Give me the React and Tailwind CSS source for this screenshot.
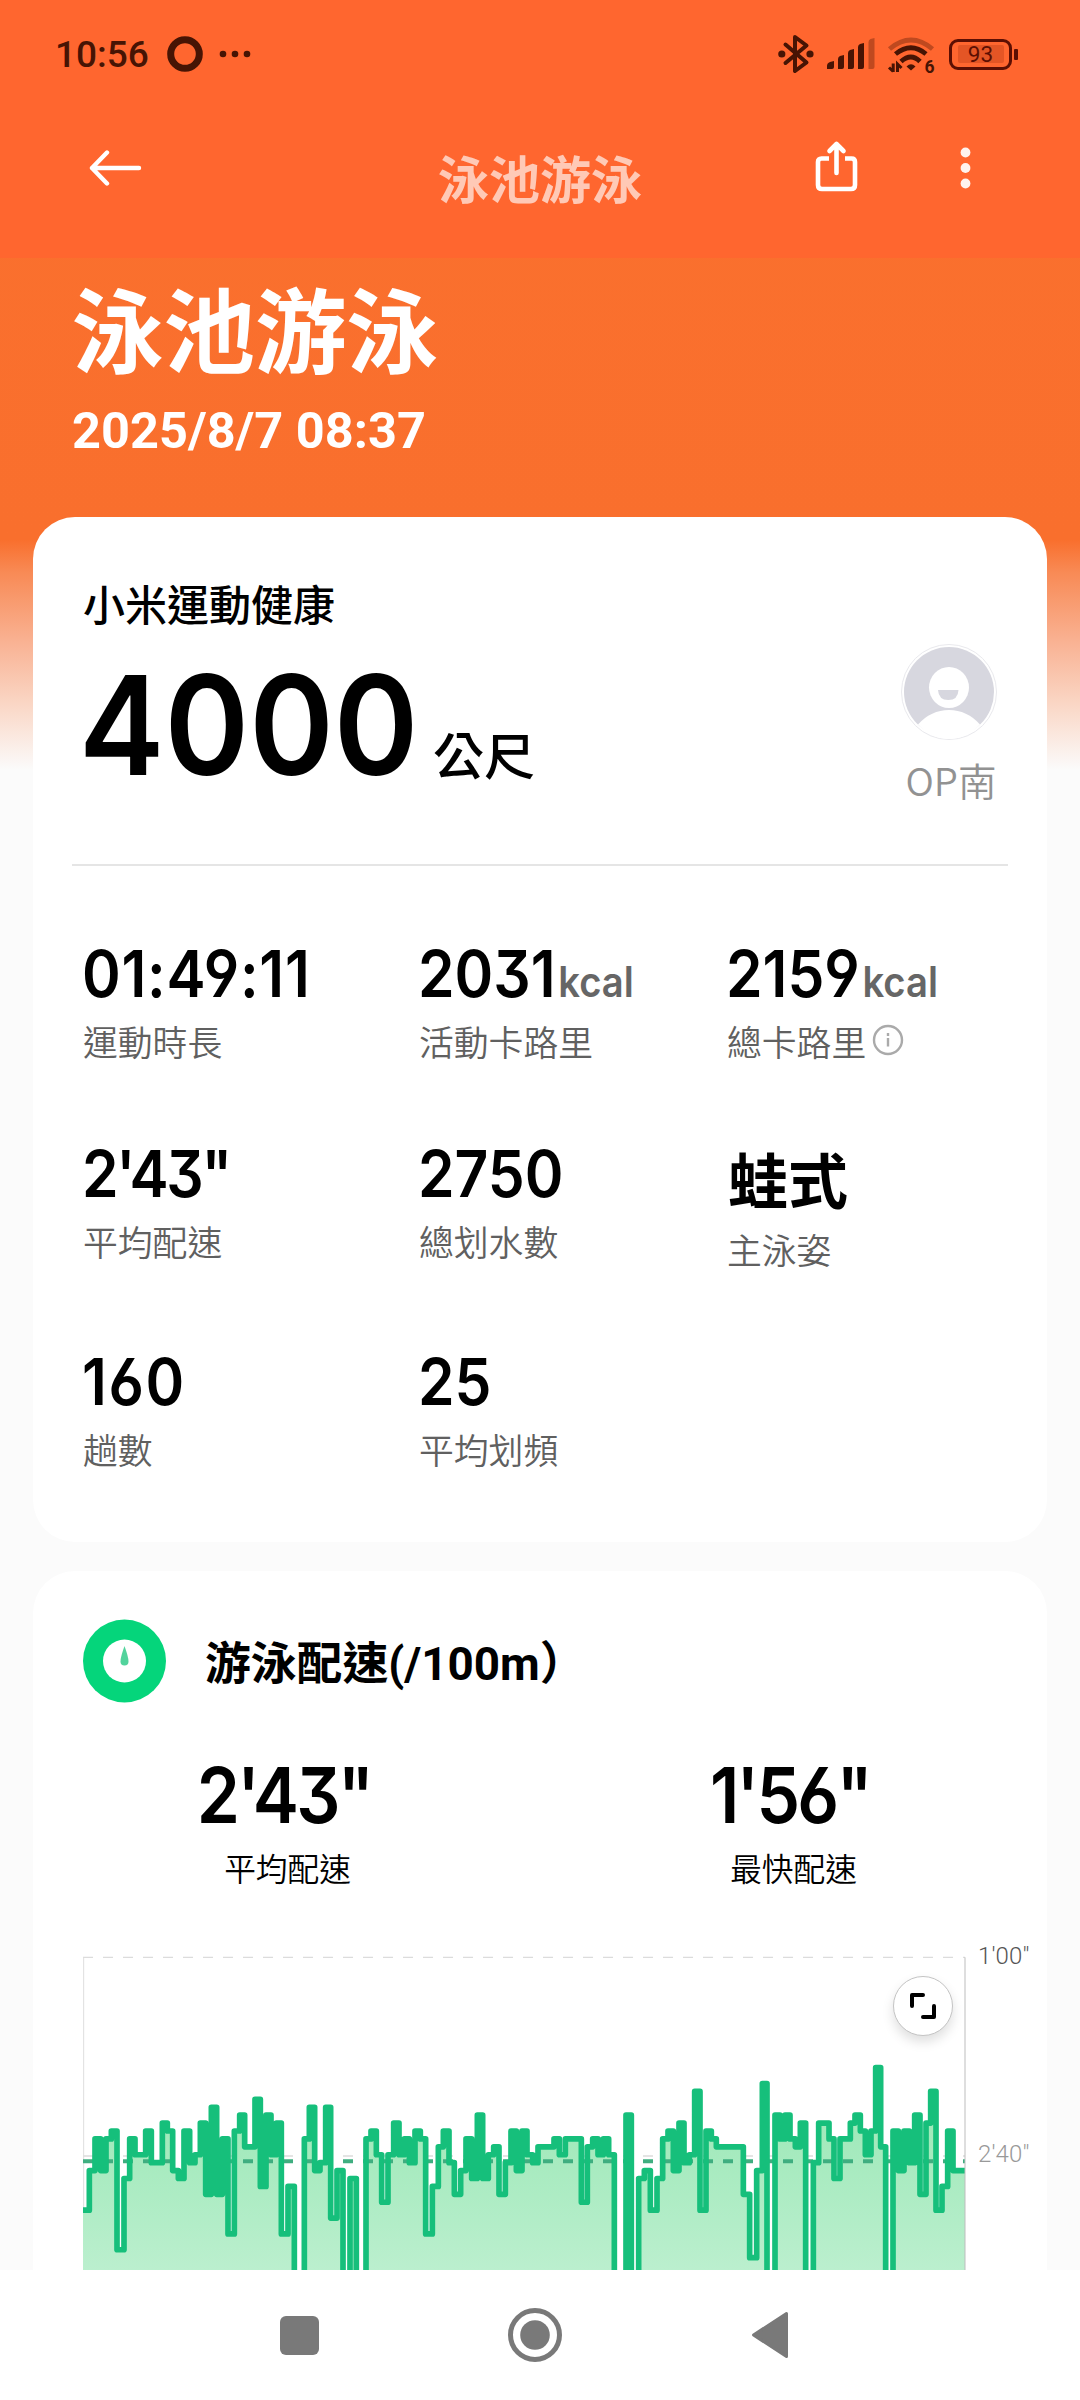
import React from "react";

const CJK = "font-['Noto_Sans_CJK_TC','Noto_Sans_CJK_SC',sans-serif]";
const NUM = "font-['Inter',sans-serif] font-semibold whitespace-nowrap [font-feature-settings:'cv03','cv04','cv09']";

/* Pace trace: each entry is [pace level, end of the lap on the time axis].
   Levels grow downwards; OFF is a rest that falls below the visible range. */
const OFF = 30;
const FIRST = [
  [14, 88], [9, 105], [5, 122], [9, 138], [5, 154], [4, 171], [19, 192], [10, 209], [5, 225], [7, 257],
  [4, 274], [8, 307], [3, 322], [4, 338], [9, 355], [10, 372], [4, 389], [8, 405], [7, 421], [3, 437],
  [12, 454], [1, 470], [12, 487], [5, 504], [17, 523], [4, 539], [2, 554], [6, 585], [0, 601], [11, 618],
  [2, 633], [7, 649], [3, 664], [17, 684], [11, 703], [OFF, 733], [5, 748], [1, 764], [9, 780], [8, 797],
  [1, 812], [15, 831], [9, 849], [OFF, 870], [10, 889], [OFF, 918], [5, 933], [4, 949], [7, 965], [13, 984],
];
const SECOND = [
  [7, 41], [3, 57], [7, 73], [5, 88], [8, 105], [4, 121], [5, 137], [17, 157], [11, 175], [6, 190],
  [4, 207], [8, 223], [12, 242], [9, 258], [5, 275], [10, 292], [2, 308], [10, 325], [7, 341], [6, 357],
  [12, 376], [8, 393], [4, 409], [9, 426], [4, 441], [7, 458], [8, 474], [6, 522], [5, 538], [7, 556],
  [5, 604], [13, 622], [6, 638], [5, 654], [7, 670], [5, 686], [7, 703], [OFF, 738], [2, 754], [OFF, 776],
  [10, 793], [9, 811], [14, 831], [10, 848], [5, 864], [4, 880], [9, 897], [3, 912], [8, 928], [7, 944], [-1, 960],
];
const THIRD = [
  [14, 18], [4, 34], [5, 49], [6, 130], [12, 149], [20, 170], [9, 187], [-2, 201], [OFF, 225], [2, 240],
  [5, 255], [2, 270], [5, 286], [6, 301], [3, 317], [OFF, 340], [8, 356], [3, 387], [5, 402], [10, 420],
  [5, 451], [3, 465], [2, 481], [4, 496], [7, 513], [4, 527], [-4, 542], [6, 557], [OFF, 579], [4, 595],
  [9, 612], [4, 628], [8, 644], [2, 660], [12, 678], [3, 692], [-1, 708], [14, 726], [11, 743], [4, 759], [9, 795],
];
const LAPS = [
  ...FIRST.map(([l, x]) => [l, x - 69]),
  ...SECOND.map(([l, x]) => [l, x + 891]),
  ...THIRD.map(([l, x]) => [l, x + 1851]),
];
const levelY = (l) => 430 + 23.75 * l;
const TRACE =
  `M0 ${levelY(LAPS[0][0])}` +
  LAPS.map(([l, x]) => `V${levelY(l)}H${x}`).join("");

function StatusBar() {
  return (
    <div className="flex h-[108px] items-center pl-[55px] pr-[68px] text-[#471404]">
      <span className="font-['Roboto',sans-serif] text-[37px] font-medium leading-none">10:56</span>
      <svg className="ml-[18px]" width="36" height="36" viewBox="0 0 36 36">
        <circle cx="18" cy="18" r="14.3" fill="none" stroke="currentColor" strokeWidth="7" />
      </svg>
      <svg className="ml-[16px]" width="32" height="8" viewBox="0 0 32 8" fill="currentColor">
        <circle cx="4" cy="4" r="3.3" />
        <circle cx="16" cy="4" r="3.3" />
        <circle cx="28" cy="4" r="3.3" />
      </svg>
      <div className="ml-auto flex items-center">
        <svg width="36" height="40" viewBox="0 0 36 40" fill="none" stroke="currentColor" strokeWidth="4" strokeLinecap="round" strokeLinejoin="round">
          <path d="M7.500 10.500L28.500 28.500L17 37V3L28.500 11.500L7.500 29" />
          <circle cx="3.800" cy="20" r="3.600" fill="currentColor" stroke="none" />
          <circle cx="32" cy="20" r="3.600" fill="currentColor" stroke="none" />
        </svg>
        <svg className="ml-[13px]" width="48" height="32" viewBox="0 0 48 32" fill="currentColor">
          <path d="M0 31v-3q0-3 3-4l4-1v6q0 2-2 2z" />
          <path d="M11 31V21q0-2 2-3l4-1v12q0 2-2 2z" />
          <path d="M21 31V15q0-2 2-3l4-1v18q0 2-2 2z" />
          <path d="M31 31V9q0-2 2-3l4-1v24q0 2-2 2z" />
          <path opacity=".35" d="M41.500 31V4q0-2 2-3l4-1v29q0 2-2 2z" />
        </svg>
        <svg className="ml-[13px] overflow-visible" width="46" height="40" viewBox="0 0 46 40" fill="none" stroke="currentColor" strokeWidth="4.800">
          <path opacity=".35" d="M1.500 15Q23 -3 44.500 15" />
          <path d="M7.500 20Q23 7.500 38 20" />
          <path d="M13 27.500Q23 18.500 32 27.500" />
          <path d="M18.500 32.500Q23 28 27.500 32.500L23 36.500z" fill="currentColor" stroke="none" />
          <path d="M5.200 29.500V38M1 33.500L5.200 37.500M9.500 38V30L13.500 34" strokeWidth="3" />
          <text x="36.500" y="39" fill="currentColor" stroke="none" fontFamily="Roboto" fontWeight="700" fontSize="17.500">6</text>
        </svg>
        <div className="relative ml-[15px] flex h-[31px] w-[63px] items-center justify-center rounded-[9px] border-[3px] border-[#5c0f03]">
          <div className="flex h-[18px] w-[46px] items-center justify-center rounded-[2px] bg-[#e45525] font-['Roboto',sans-serif] text-[22.500px] leading-none text-[#5c0f03]">93</div>
          <div className="absolute -right-[9px] top-[7px] h-[11px] w-[4px] rounded-[1px] bg-[#5c0f03]" />
        </div>
      </div>
    </div>
  );
}

function Toolbar() {
  return (
    <div className="grid h-[150px] grid-cols-[360px_360px_360px] text-white">
      <div className="pl-[88px] pt-[42px]">
        <svg width="54" height="36" viewBox="0 0 54 36" fill="none" stroke="currentColor" strokeWidth="4.400" strokeLinecap="round" strokeLinejoin="round">
          <path d="M51 18H4M19 2.500L4 18l15 15.500" />
        </svg>
      </div>
      <div className={`${CJK} pt-[42px] text-center text-[51px] font-bold leading-[54px] text-white/65`}>泳池游泳</div>
      <div className="flex pl-[94px] pt-[31px]">
        <svg width="45" height="54" viewBox="0 0 45 54" fill="none" stroke="currentColor" strokeWidth="4.600" strokeLinecap="round" strokeLinejoin="round">
          <path strokeLinecap="butt" d="M15 19.500H7.500Q4 19.500 4 23V46Q4 50 8 50H37Q41 50 41 46V23Q41 19.500 37.500 19.500H31" />
          <path d="M22.500 34V5M15.500 12L22.500 5L29.500 12" />
        </svg>
        <svg className="ml-[100px] mt-[6px]" width="14" height="46" viewBox="0 0 14 46" fill="currentColor" opacity=".92">
          <circle cx="6.500" cy="7.500" r="4.900" />
          <circle cx="6.500" cy="23" r="4.900" />
          <circle cx="6.500" cy="38.500" r="4.900" />
        </svg>
      </div>
    </div>
  );
}

function Stat({ value, unit, label, info, spacing, cjk }) {
  return (
    <div className="pl-[2px]">
      {cjk ? (
        <div className={`${CJK} h-[76px] pt-[8px] text-[60px] font-bold leading-[60px] text-black`}>{value}</div>
      ) : (
        <div className="-ml-[2px] flex h-[68px] origin-left scale-x-[0.91] items-baseline leading-[68px]">
          <span className={`${NUM} text-[64.500px] text-black ${spacing || ""}`}>{value}</span>
          {unit && <span className={`${NUM} ml-[3px] text-[42px] text-[#666]`}>{unit}</span>}
        </div>
      )}
      <div className={`${CJK} mt-[13px] flex items-center text-[34.800px] font-[350] leading-[40px] text-[#606060] -ml-[1px]`}>
        {label}
        {info && (
          <svg className="ml-[5px] -mt-[2px]" width="34" height="34" viewBox="0 0 34 34" fill="none" stroke="#aaa" strokeWidth="2.400">
            <circle cx="17" cy="17" r="14" />
            <path d="M17 15v8.500M17 10v3" />
          </svg>
        )}
      </div>
    </div>
  );
}

function Summary() {
  return (
    <section className="mx-[33px] h-[1025px] rounded-[42px] bg-white">
      <div className="flex h-[347px] pl-[50px] pt-[62px]">
        <div className="w-[780px]">
          <div className={`${CJK} text-[42px] font-medium leading-[48px] text-black`}>小米運動健康</div>
          <div className="mt-[23px] flex items-baseline leading-[150px] text-black">
            <span className={`${NUM} w-[351px] origin-left scale-x-[0.93] text-[138px] -ml-[4px]`}>4000</span>
            <span className={`${CJK} ml-[3px] text-[51px] font-medium`}>公尺</span>
          </div>
        </div>
        <div className="ml-[13px] flex w-[146px] flex-col items-center pt-[65px]">
          <svg width="96" height="96" viewBox="0 0 96 96">
            <circle cx="48" cy="48" r="47.500" fill="none" stroke="#e9e9ed" strokeWidth="1" />
            <circle cx="48" cy="48" r="45" fill="#d7d7df" />
            <path d="M17 80.500Q30 66 48 66T79 80.500Q66 95 48 95T17 80.500z" fill="#fff" />
            <ellipse cx="48" cy="43.500" rx="20" ry="20.500" fill="#fff" />
            <path d="M37 46H57.500Q57 56 47.300 56T37 46z" fill="#d7d7df" />
          </svg>
          <div className={`${CJK} mt-[17px] ml-[4px] text-[38.500px] font-[350] leading-[44px] text-[#929292]`}>OP南</div>
        </div>
      </div>
      <div className="mx-[39px] h-[2px] bg-[#e5e5e5]" />
      <div className="grid grid-cols-[336px_308px_1fr] pl-[49px] pt-[74px]">
        <div className="h-[200px]"><Stat value="01:49:11" label="運動時長" spacing="tracking-[0.8px]" /></div>
        <Stat value="2031" unit="kcal" label="活動卡路里" />
        <Stat value="2159" unit="kcal" label="總卡路里" info />
        <div className="h-[208px]"><Stat value={"2'43\""} label="平均配速" spacing="tracking-[-2.5px]" /></div>
        <Stat value="2750" label="總划水數" />
        <Stat value="蛙式" label="主泳姿" cjk />
        <Stat value="160" label="趟數" spacing="tracking-[1.8px]" />
        <Stat value="25" label="平均划頻" />
      </div>
    </section>
  );
}

function Chart() {
  return (
    <div className="relative ml-[1px] flex h-[314px]">
      <svg width="883" height="314" viewBox="0 0 2649 942" fill="none">
        <defs>
          <linearGradient id="pace" x1="0" y1="500" x2="0" y2="942" gradientUnits="userSpaceOnUse">
            <stop offset="0" stopColor="#a0e9ba" />
            <stop offset="1" stopColor="#bbefce" />
          </linearGradient>
        </defs>
        <path d="M0 4H2646M0 600H2646" stroke="#dcdcdc" strokeWidth="4" strokeDasharray="30 30" />
        <path d="M2 4V942" stroke="#dedede" strokeWidth="3" />
        <path d={`${TRACE}V1200H0z`} fill="url(#pace)" />
        <path d="M0 616H2646" stroke="#3fae80" strokeWidth="12" strokeDasharray="30 30" />
        <path d={TRACE} stroke="#16bf7b" strokeWidth="17" strokeLinejoin="round" />
        <path d="M2646 4V942" stroke="#bdbdbd" strokeWidth="3" />
      </svg>
      <div className="ml-[12px] flex flex-col justify-between font-['Roboto',sans-serif] text-[24px] font-light leading-[24px] tracking-[0.100px]">
        <span className="-mt-[12px] text-[#555]">1'00"</span>
        <span className="mb-[104px] text-[#999]">2'40"</span>
      </div>
      <div className="absolute left-[810px] top-[20px] flex size-[60px] items-center justify-center rounded-full border border-[#c4c4c4] bg-white shadow-[0_6px_12px_rgba(0,0,0,0.13)]">
        <svg width="28" height="28" viewBox="0 0 28 28" fill="none" stroke="#000" strokeWidth="4" strokeLinecap="round" strokeLinejoin="round">
          <path d="M3 14V3H14M25 14V25H14" />
        </svg>
      </div>
    </div>
  );
}

function Pace() {
  return (
    <section className="mx-[33px] mt-[29px] h-[699px] rounded-t-[42px] bg-white pl-[49px] pt-[48px]">
      <div className="flex h-[84px] items-center">
        <svg width="84" height="84" viewBox="0 0 84 84">
          <circle cx="42.500" cy="42" r="41.500" fill="#05d57b" />
          <circle cx="42.500" cy="42" r="21.500" fill="#fff" />
          <path d="M42.500 27Q46.500 38 46.500 42.500A4 4 0 0 1 38.500 42.500Q38.500 38 42.500 27z" fill="#52d39c" />
        </svg>
        <h2 className="ml-[39px] pt-[8px] font-['Roboto','Noto_Sans_CJK_TC',sans-serif] text-[45.800px] font-bold leading-[60px] text-black">游泳配速(/100m）</h2>
      </div>
      <div className="grid h-[253px] grid-cols-[506px_506px] -ml-[49px] pt-[52px] text-center text-black">
        {[["2'43\"", "平均配速"], ["1'56\"", "最快配速"]].map(([v, l]) => (
          <div key={l}>
            <div className={`${NUM} -ml-[4px] scale-x-[0.9] text-[77px] leading-[80px] tracking-[-3px]`}>{v}</div>
            <div className={`${CJK} mt-[12px] pl-[3px] text-[31.700px] font-[350] leading-[40px]`}>{l}</div>
          </div>
        ))}
      </div>
      <Chart />
    </section>
  );
}

function NavBar() {
  return (
    <nav className="h-[130px] bg-white pl-[280px] pt-[38px]">
      <div className="flex items-center text-[#797979]">
        <div className="size-[39px] rounded-[6px] bg-[#797979]" />
        <svg className="ml-[189px]" width="54" height="54" viewBox="0 0 54 54">
          <circle cx="27" cy="27" r="24.500" fill="none" stroke="currentColor" strokeWidth="5" />
          <circle cx="27" cy="27" r="14.800" fill="currentColor" />
        </svg>
        <svg className="ml-[189px]" width="38" height="48" viewBox="0 0 38 48" fill="currentColor" stroke="currentColor" strokeWidth="3" strokeLinejoin="round">
          <path d="M2.500 24L35.500 2.500V45.500z" />
        </svg>
      </div>
    </nav>
  );
}

export default function App() {
  return (
    <div className="h-[2400px] w-[1080px] overflow-hidden bg-[linear-gradient(to_bottom,#fb702e_0px,#f96f2d_540px,#f88a55_572px,#f9b293_642px,#fad7c6_705px,#fbfbfb_770px,#fbfbfb_2400px)]">
      <header className="h-[258px] bg-[#ff662f]">
        <StatusBar />
        <Toolbar />
      </header>
      <div className="h-[259px] pl-[72px] pt-[16px] text-white">
        <h1 className={`${CJK} text-[91.500px] font-bold leading-[104px]`}>泳池游泳</h1>
        <p className="mt-[23px] font-['Roboto',sans-serif] text-[50.500px] font-bold leading-[60px]">2025/8/7 08:37</p>
      </div>
      <Summary />
      <Pace />
      <NavBar />
    </div>
  );
}
